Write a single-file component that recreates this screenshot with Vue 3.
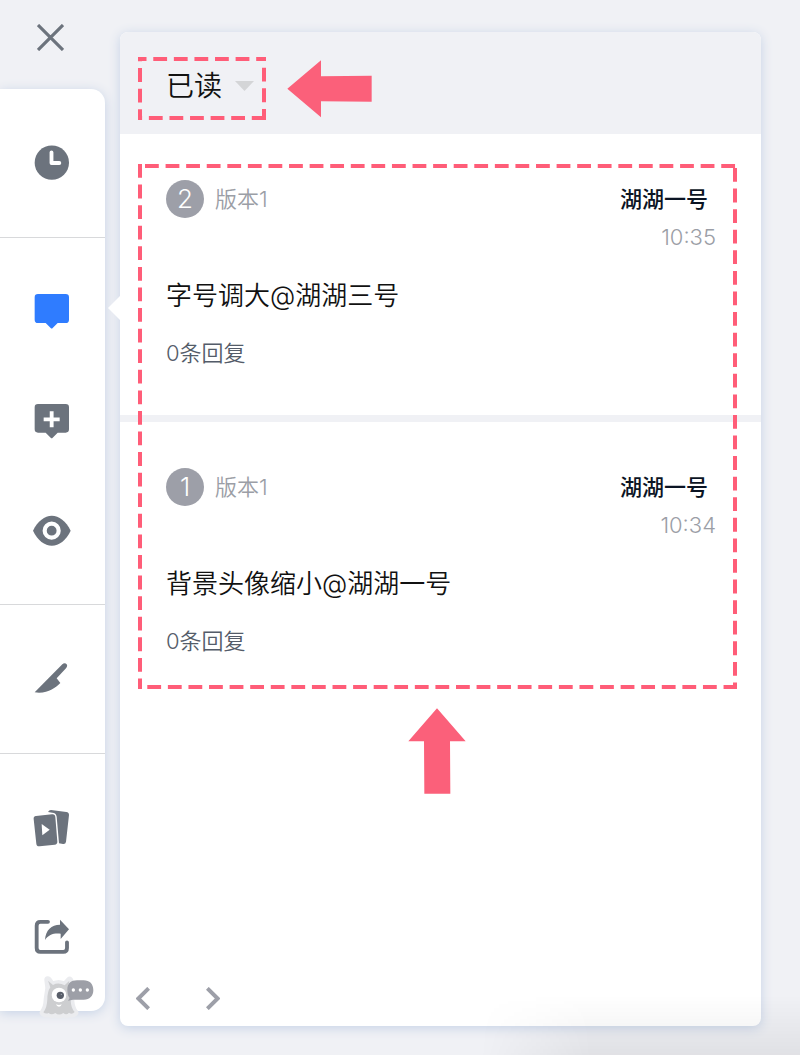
<script setup>
import { ref } from 'vue'

const filter = ref('read')
const comments = [
  { id: 2, version: '版本1', author: '湖湖一号', time: '10:35', text: '字号调大@湖湖三号', replies: '0条回复' },
  { id: 1, version: '版本1', author: '湖湖一号', time: '10:34', text: '背景头像缩小@湖湖一号', replies: '0条回复' },
]
</script>

<template>
  <div class="page">
    <aside class="side">
      <button class="close" aria-label="关闭">
        <svg width="27" height="27" viewBox="0 0 81 81"><path d="M3 3 78 78M78 3 3 78" stroke="#6c737d" stroke-width="9.500" /></svg>
      </button>

      <nav class="toolbar">
        <div class="group">
          <button class="tool" aria-label="历史">
            <svg viewBox="96 426 123 123">
              <circle cx="155.500" cy="488" r="51.500" />
              <path class="line" d="M154.500 457V489H178" stroke-width="11.500" />
            </svg>
          </button>
        </div>
        <div class="group">
          <button class="tool active" aria-label="评论">
            <svg viewBox="96 63 123 123">
              <path d="M114 72H197Q207 72 207 82V149Q207 159 197 159H173L158 174Q155 177 152 174L137 159H114Q104 159 104 149V82Q104 72 114 72Z" />
            </svg>
          </button>
          <button class="tool" aria-label="添加评论">
            <svg viewBox="96 390 123 123">
              <path d="M114 402H197Q207 402 207 412V478Q207 488 197 488H173L158 503Q155 506 152 503L137 488H114Q104 488 104 478V412Q104 402 114 402Z" />
              <path d="M155 424V472M131 448H179" stroke="#fff" stroke-width="11.500" />
            </svg>
          </button>
          <button class="tool" aria-label="预览">
            <svg viewBox="96 57 123 123">
              <path d="M99 122C113 93 134 77 155.500 77S198 93 212 122C198 151 177 167 155.500 167S113 151 99 122Z" />
              <circle cx="155" cy="122" r="21" fill="none" stroke="#fff" stroke-width="12.500" />
            </svg>
          </button>
        </div>
        <div class="group">
          <button class="tool" aria-label="切图">
            <svg viewBox="96 504 123 123">
              <path d="M104 607 187 523C191 519 197 519 200 523C203 527 201 531 198 535L170 565L181 579C165 595 142 612 104 607Z" />
            </svg>
          </button>
        </div>
        <div class="group">
          <button class="tool" aria-label="演示">
            <svg viewBox="96 51 123 123">
              <path d="M144 66Q147 60 153 60L199 66Q207 67 207 75L198 155Q197 163 189 162L177 160L170 80Q168 68 157 68Z" />
              <path d="M108 78 156 73Q165 72 166 81L172 155Q172 163 164 164L119 169Q110 170 109 161L101 87Q100 79 108 78Z" />
              <path d="M125 102 149 119 127 136Z" fill="#fff" />
            </svg>
          </button>
          <button class="tool" aria-label="分享">
            <svg viewBox="96 378 123 123">
              <path d="M144 395.500H121Q110 395.500 110 407V474Q110 485.500 121 485.500H190Q201 485.500 201 474V457" fill="none" stroke="#6c737d" stroke-width="11.500" stroke-linecap="round" />
              <path d="M135 450C137 419 154 405 180 404V389L207 418L182 447V431C160 429 146 434 135 450Z" />
            </svg>
          </button>
        </div>
        <svg class="mascot" width="60" height="50" viewBox="20 35 180 150">
          <path d="M53 59 66 77Q84 64 103 76L118 60L115 82Q122 100 121 122Q123 145 133 157Q125 164 116 158Q108 166 99 159Q86 168 75 159Q63 167 55 159Q46 163 39 157Q50 143 51 117L56 83Z" fill="#ebecef" stroke="#ebecef" stroke-width="22" stroke-linejoin="round" />
          <path d="M53 61 68 74Q84 65 103 75L117 61L113 82Q121 98 121 120Q122 145 133 155Q125 164 116 157Q108 166 99 158Q86 167 75 158Q63 166 55 158Q46 162 39 156Q50 143 51 117Q51 94 60 81Z" fill="#cdced0" />
          <path d="M111 88C111 69 122 60 140 60H160C178 60 189 71 189 89S178 118 160 118H128L113 121L118 113Q111 105 111 88Z" fill="#9d9fa7" />
          <circle cx="86" cy="104" r="22" fill="#fff" />
          <circle cx="90" cy="105" r="11" fill="#595e69" />
          <circle cx="93" cy="102" r="2" fill="#a7adb7" />
          <path d="M77 132Q86 136 94 132Q93 139 86 139T77 132Z" fill="#fff" />
          <g fill="#fff"><circle cx="129" cy="89" r="5" /><circle cx="150" cy="89" r="5" /><circle cx="171" cy="89" r="5" /></g>
        </svg>
      </nav>
    </aside>

    <main class="panel">
      <header class="head">
        <div class="filter">
          <select v-model="filter" aria-label="评论筛选">
            <option value="read">已读</option>
            <option value="unread">未读</option>
          </select>
          <svg class="caret" width="19" height="10" viewBox="0 0 19 10"><path d="M0 0H19L9.500 10Z" fill="#d4d5d7" /></svg>
          <svg class="dashes">
            <line x1="0" y1="2" x2="100%" y2="2" stroke-dashoffset="5.300" />
            <line x1="2" y1="0" x2="2" y2="100%" stroke-dashoffset="9.500" />
            <svg x="100%" overflow="visible"><line x1="-2" y1="0" x2="-2" y2="63" stroke-dashoffset="9.800" /></svg>
            <svg y="100%" overflow="visible"><line x1="0" y1="-2" x2="128" y2="-2" stroke-dashoffset="9.700" /></svg>
          </svg>
        </div>
        <svg class="arrow-left" width="85" height="58" viewBox="0 0 255 174"><path d="M1 86 102 1V49L254 47V125L102 124V172Z" fill="#fb607a" /></svg>
      </header>

      <section class="list">
        <article v-for="c in comments" :key="c.id" class="comment">
          <div class="meta">
            <span class="badge">{{ c.id }}</span>
            <span class="version">{{ c.version }}</span>
            <div class="by">
              <strong>{{ c.author }}</strong>
              <time>{{ c.time }}</time>
            </div>
          </div>
          <p class="text">{{ c.text }}</p>
          <a class="replies" href="#">{{ c.replies }}</a>
        </article>
        <div class="highlight">
          <svg class="dashes">
            <line x1="0" y1="2" x2="100%" y2="2" stroke-dashoffset="-7" />
            <line x1="2" y1="0" x2="2" y2="100%" />
            <svg x="100%" height="100%" overflow="visible"><line x1="-2" y1="0" x2="-2" y2="100%" stroke-dashoffset="-4" /></svg>
            <svg y="100%" width="100%" overflow="visible"><line x1="0" y1="-2" x2="100%" y2="-2" stroke-dashoffset="-9.300" /></svg>
          </svg>
          <svg class="arrow-up" width="58" height="86" viewBox="0 0 174 258"><path d="M87 1 173 100H126L127 257H49L48 100H1Z" fill="#fb607a" /></svg>
        </div>
      </section>

      <footer class="pager">
        <button aria-label="上一页"><svg width="14" height="23" viewBox="0 0 42 69"><path d="M38 4 7 34.500 38 65" /></svg></button>
        <button aria-label="下一页"><svg width="14" height="23" viewBox="0 0 42 69"><path d="M4 4 35 34.500 4 65" /></svg></button>
      </footer>
    </main>
    <div class="shade"></div>
  </div>
</template>

<style>
html, body { background: #f0f1f5; }
</style>

<style scoped>
* { box-sizing: border-box; }
.page {
  position: relative;
  display: flex;
  align-items: stretch;
  gap: 15px;
  min-height: 100vh;
  padding: 0 39px 29px 0;
  overflow: hidden;
  background: #f0f1f5;
  font-family: Inter, "Noto Sans CJK SC", sans-serif;
  font-weight: 350;
}
button { padding: 0; border: 0; background: none; cursor: pointer; }
svg { display: block; }
.side { flex: none; width: 105px; }
.close { display: flex; width: 100%; height: 89px; padding: 24px 0 0 37px; }
.toolbar {
  position: relative;
  background: #fff;
  border-radius: 0 14px 14px 0;
  box-shadow: 0 2px 12px #c5d2e6;
}
.group { padding: 19px 0 20px; }
.group + .group { border-top: 1px solid #d8d9db; }
.tool { display: block; width: 100%; height: 109px; padding: 34px 32px; }
.tool svg { width: 41px; height: 41px; fill: #6c737d; }
.tool.active svg { fill: #2f7cff; }
.line { fill: none; stroke: #fff; stroke-linecap: round; stroke-linejoin: round; }
.mascot { position: absolute; left: 37px; bottom: -11px; }

.panel {
  position: relative;
  display: flex;
  flex: 1;
  flex-direction: column;
  margin-top: 32px;
  background: #fff;
  border-radius: 8px;
  box-shadow: 0 2px 12px #c5d2e6;
}
.panel::before {
  content: "";
  position: absolute;
  left: -12px;
  top: 264px;
  border: 12px solid transparent;
  border-width: 12px 12px 12px 0;
  border-right-color: #fff;
}
.head {
  display: flex;
  align-items: flex-start;
  gap: 21px;
  height: 102px;
  padding: 25px 18px 0;
  background: #f0f1f5;
  border-radius: 8px 8px 0 0;
}
.filter { position: relative; display: flex; align-items: center; width: 128px; height: 63px; }
.filter select {
  appearance: none;
  width: 100%;
  height: 55px;
  padding: 0 0 10px 28px;
  border: 0;
  background: none;
  color: #111;
  font: 350 28px "Noto Sans CJK SC", sans-serif;
}
.caret { position: absolute; right: 12px; top: 24px; pointer-events: none; }
.dashes { position: absolute; inset: 0; width: 100%; height: 100%; pointer-events: none; }
.dashes line { stroke: #ff5d78; stroke-width: 4; stroke-dasharray: 13.800 6.780; }
.arrow-left { margin-top: 3px; }

.list { position: relative; flex: 1; }
.comment { height: 288px; padding: 46px 45px 0 46px; }
.comment:not(:nth-child(2)) { border-bottom: 7px solid #f0f1f5; }
.meta { display: flex; align-items: flex-start; height: 76px; }
.badge {
  width: 38px;
  height: 38px;
  border-radius: 50%;
  background: #9d9fa8;
  color: #fff;
  font-size: 26px;
  line-height: 38px;
  text-align: center;
}
.version { margin-left: 11px; color: #9b9ea6; font-size: 22px; line-height: 38px; }
.by { display: flex; flex-direction: column; align-items: flex-end; margin-left: auto; font-size: 22px; line-height: 38px; }
.by strong { margin-right: 8px; color: #0b1424; font-weight: 500; }
.by time { color: #9b9ea6; font-weight: 300; }
.text { margin: 20px 0 0; color: #111; font-size: 26px; line-height: 40px; }
.replies { display: inline-block; margin-top: 18px; color: #545c69; font-size: 22px; line-height: 38px; text-decoration: none; }
.highlight { position: absolute; inset: 30px 24px auto 18px; height: 525px; pointer-events: none; }
.arrow-up { position: absolute; left: 50%; top: 544px; margin-left: -30px; }

.pager { display: flex; gap: 56px; padding: 0 16px 16px; }
.pager path { fill: none; stroke: #9d9fa8; stroke-width: 12; }
.shade {
  position: absolute;
  right: 0;
  bottom: 0;
  width: 40%;
  height: 60px;
  background: linear-gradient(transparent, #00000010);
  mask-image: linear-gradient(90deg, transparent, #000 35%);
  pointer-events: none;
}
</style>
